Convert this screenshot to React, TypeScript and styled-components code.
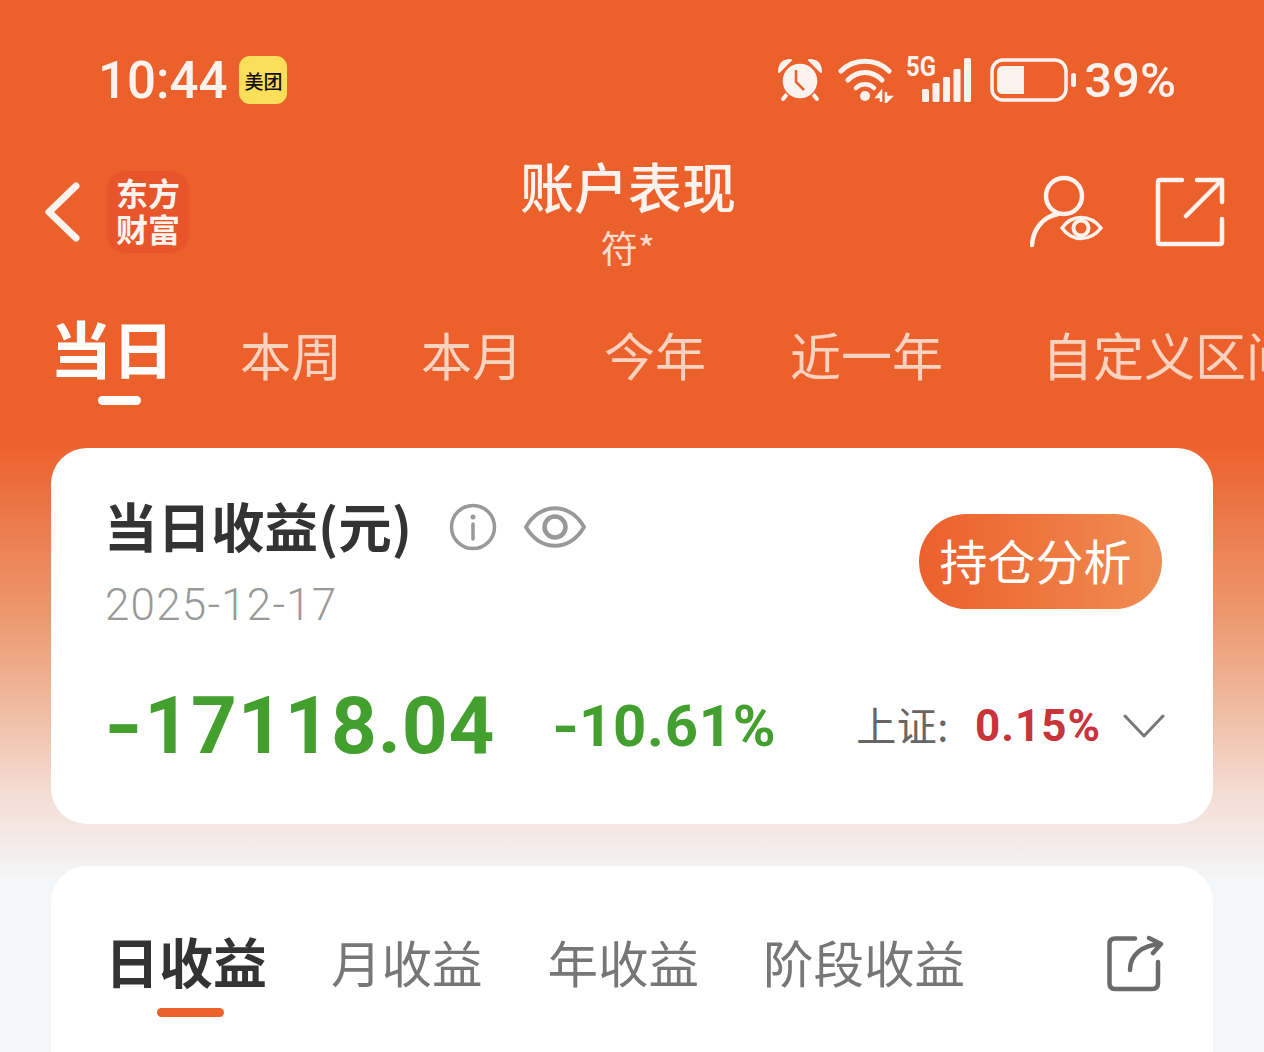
import * as React from 'react'
import styled, { createGlobalStyle } from 'styled-components'

const GlobalStyle = createGlobalStyle`
	html, body {
		margin: 0;
		padding: 0;
		background: #f5f6f8;
	}
	* {
		box-sizing: border-box;
	}
`

const rangeTabs = [
	{ label: '本周', gap: 79 },
	{ label: '本月', gap: 81 },
	{ label: '今年', gap: 84 },
	{ label: '近一年', gap: 99 },
	{ label: '自定义区间', gap: 0 },
]

const profitTabs = [
	{ label: '月收益', gap: 65 },
	{ label: '年收益', gap: 64 },
	{ label: '阶段收益', gap: 0 },
]

const signalBars = [
	{ x: 0, h: 13 },
	{ x: 10.5, h: 19 },
	{ x: 21, h: 25 },
	{ x: 31.5, h: 33 },
	{ x: 42, h: 44 },
]

const AlarmIcon = () => (
	<svg width="48" height="46" viewBox="0 0 48 46">
		<path d="M1 15 Q1 3 13 3 Z M43 15 Q43 3 31 3 Z" fill="#fdf3ee" stroke="#fdf3ee" strokeWidth="2" strokeLinejoin="round" />
		<path d="M10 36 L5 42 M34 36 L39 42" stroke="#fdf3ee" strokeWidth="4" strokeLinecap="round" />
		<circle cx="22" cy="24" r="18" fill="#fdf3ee" stroke="#ec602c" strokeWidth="1.5" />
		<path d="M18 13 V25 L26 33" fill="none" stroke="#ec602c" strokeWidth="2.5" />
	</svg>
)

const WifiIcon = () => (
	<svg width="56" height="46" viewBox="0 0 56 46" fill="none">
		<path d="M3 14 C16 1 38 1 51 14" stroke="#fdf3ee" strokeWidth="5" strokeLinecap="round" />
		<path d="M10 23 C20 13 34 13 44 23" stroke="#fdf3ee" strokeWidth="5" strokeLinecap="round" />
		<path d="M18 31 C23 26 31 26 36 31" stroke="#fdf3ee" strokeWidth="4.5" strokeLinecap="round" />
		<circle cx="27" cy="39" r="5" fill="#fdf3ee" />
		<path d="M43 45 V35 L39 40 H43 M48 35 V45 L53 40 H48" stroke="#fdf3ee" strokeWidth="2.5" />
	</svg>
)

const SignalIcon = () => (
	<svg width="49" height="44" viewBox="0 0 49 44">
		{signalBars.map((bar) => (
			<rect key={bar.x} x={bar.x} y={44 - bar.h} width="7" height={bar.h} rx="1.5" fill="#fdf3ee" />
		))}
	</svg>
)

const BatteryIcon = () => (
	<svg width="88" height="44" viewBox="0 0 88 44" fill="none">
		<rect x="2" y="2" width="74" height="40" rx="11" stroke="#fdf3ee" strokeWidth="3.5" />
		<path d="M7 14 Q7 8 13 8 H34 V36 H13 Q7 36 7 30 Z" fill="#fdf3ee" />
		<rect x="81" y="15" width="5" height="14" rx="2" fill="#fdf3ee" />
	</svg>
)

const BackIcon = () => (
	<svg width="38" height="64" viewBox="0 0 38 64" fill="none">
		<path d="M32 6 L5 32 L32 58" stroke="#fdf3ee" strokeWidth="7" strokeLinecap="round" strokeLinejoin="round" />
	</svg>
)

const WatchUserIcon = () => (
	<svg width="76" height="74" viewBox="0 0 76 74" fill="none" stroke="#fdf3ee" strokeLinecap="round">
		<circle cx="34" cy="21" r="18" strokeWidth="4.5" />
		<path d="M2 70 C3 55 12 42 28 39" strokeWidth="4.5" />
		<path d="M32 53 C42 39 60 39 71 53 C60 67 42 67 32 53 Z" strokeWidth="3.5" />
		<circle cx="51" cy="53" r="7.5" strokeWidth="4" />
	</svg>
)

const OpenIcon = () => (
	<svg width="70" height="70" viewBox="0 0 70 70" fill="none" stroke="#fdf3ee" strokeWidth="4.5" strokeLinecap="round" strokeLinejoin="round">
		<path d="M27 3 H5 Q3 3 3 5 V65 Q3 67 5 67 H65 Q67 67 67 65 V42" />
		<path d="M42 3 H67 V25 M67 3 L31 39" />
	</svg>
)

const InfoIcon = () => (
	<svg width="48" height="48" viewBox="0 0 48 48" fill="none" stroke="#999" strokeLinecap="round">
		<circle cx="24" cy="24" r="21.5" strokeWidth="3.5" />
		<circle cx="24" cy="14" r="2.5" fill="#999" stroke="none" />
		<path d="M24 21 V36" strokeWidth="3.5" />
	</svg>
)

const EyeIcon = () => (
	<svg width="62" height="48" viewBox="0 0 62 48" fill="none" stroke="#999">
		<path d="M2 24 C16 -1 46 -1 60 24 C46 49 16 49 2 24 Z" strokeWidth="3.8" />
		<circle cx="31" cy="24" r="10.5" strokeWidth="4.5" />
	</svg>
)

const ChevronIcon = () => (
	<svg width="42" height="26" viewBox="0 0 42 26" fill="none">
		<path d="M2 3 L21 23 L40 3" stroke="#777" strokeWidth="3" strokeLinecap="round" strokeLinejoin="round" />
	</svg>
)

const ShareIcon = () => (
	<svg width="58" height="57" viewBox="0 0 58 57" fill="none" stroke="#6b6b6b" strokeWidth="4.5" strokeLinecap="round" strokeLinejoin="round">
		<path d="M29 3.5 H9 Q3.5 3.5 3.5 9 V48 Q3.5 54 9 54 H46 Q52 54 52 48 V27" />
		<path d="M24 35 C24 20 36 10 55 9 M43 3 L55 9 L47 18" />
	</svg>
)

export default function App() {
	return (
		<Page>
			<GlobalStyle />
			<StatusBar>
				<Clock>10:44</Clock>
				<MeituanBadge>美团</MeituanBadge>
				<StatusIcons>
					<AlarmIcon />
					<WifiIcon />
					<NetworkGroup>
						<NetworkLabel>5G</NetworkLabel>
						<SignalIcon />
					</NetworkGroup>
					<BatteryIcon />
					<BatteryLevel>39%</BatteryLevel>
				</StatusIcons>
			</StatusBar>

			<Header>
				<HeaderLeft>
					<BackIcon />
					<BrandLogo>东方<br />财富</BrandLogo>
				</HeaderLeft>
				<TitleBlock>
					<Title>账户表现</Title>
					<Subtitle>符*</Subtitle>
				</TitleBlock>
				<HeaderActions>
					<WatchUserIcon />
					<OpenIcon />
				</HeaderActions>
			</Header>

			<RangeTabs>
				<ActiveRange>
					当日
					<RangeMarker />
				</ActiveRange>
				{rangeTabs.map((tab) => (
					<RangeTab key={tab.label} $gap={tab.gap}>{tab.label}</RangeTab>
				))}
			</RangeTabs>

			<SummaryCard>
				<SummaryTop>
					<div>
						<SummaryHeading>
							<SummaryTitle>当日收益(元)</SummaryTitle>
							<InfoIcon />
							<EyeSlot>
								<EyeIcon />
							</EyeSlot>
						</SummaryHeading>
						<SummaryDate>2025-12-17</SummaryDate>
					</div>
					<AnalysisButton>持仓分析</AnalysisButton>
				</SummaryTop>
				<SummaryBottom>
					<Amount><AmountSign>-</AmountSign>17118.04</Amount>
					<Percent><PercentSign>-</PercentSign>10.61%</Percent>
					<IndexBlock>
						<IndexLabel>上证:</IndexLabel>
						<IndexValue>0.15%</IndexValue>
						<ChevronIcon />
					</IndexBlock>
				</SummaryBottom>
			</SummaryCard>

			<ProfitCard>
				<ProfitTabs>
					<ActiveProfit>
						日收益
						<ProfitMarker />
					</ActiveProfit>
					{profitTabs.map((tab) => (
						<ProfitTab key={tab.label} $gap={tab.gap}>{tab.label}</ProfitTab>
					))}
				</ProfitTabs>
				<ShareSlot>
					<ShareIcon />
				</ShareSlot>
			</ProfitCard>
		</Page>
	)
}

const cjk = `"Noto Sans CJK SC", "Noto Sans", sans-serif`
const digits = `Roboto, "Noto Sans CJK SC", sans-serif`

const Page = styled.div`
	width: 1264px;
	height: 1052px;
	overflow: hidden;
	font-family: ${cjk};
	background: linear-gradient(180deg, #ec602c 0, #ec602c 440px, #ec9a70 620px, #f0c0a8 720px, #f3dcd2 790px, #f5f6f8 880px);
`

const StatusBar = styled.div`
	display: flex;
	align-items: center;
	height: 160px;
	padding: 0 88px 0 98px;
`

const Clock = styled.div`
	font-family: ${digits};
	font-size: 51px;
	font-weight: 500;
	color: #fdf3ee;
`

const MeituanBadge = styled.div`
	display: flex;
	align-items: center;
	justify-content: center;
	width: 48px;
	height: 48px;
	margin-left: 12px;
	border-radius: 11px;
	background: #fbdf5a;
	color: #111;
	font-size: 19px;
	font-weight: 500;
	white-space: nowrap;
`

const StatusIcons = styled.div`
	display: flex;
	align-items: center;
	gap: 12px;
	margin-left: auto;
`

const NetworkGroup = styled.div`
	position: relative;
	display: flex;
	padding: 0 7px 0 16px;
`

const NetworkLabel = styled.span`
	position: absolute;
	left: 0;
	top: -6px;
	font-family: ${digits};
	font-size: 28px;
	font-weight: 700;
	line-height: 30px;
	color: #fdf3ee;
	transform: scaleX(0.85);
	transform-origin: left center;
`

const BatteryLevel = styled.div`
	margin-left: -6px;
	font-family: ${digits};
	font-size: 49px;
	font-weight: 500;
	color: #fdf3ee;
`

const Header = styled.div`
	position: relative;
	display: flex;
	align-items: center;
	justify-content: space-between;
	height: 104px;
	padding: 0 39px 0 44px;
`

const HeaderLeft = styled.div`
	display: flex;
	align-items: center;
	gap: 25px;
`

const BrandLogo = styled.div`
	width: 82px;
	height: 82px;
	padding-top: 3px;
	border-radius: 18px;
	background: #e9552a;
	color: #fdf3ee;
	font-family: ${cjk};
	font-size: 32px;
	font-weight: 700;
	line-height: 36px;
	text-align: center;
`

const TitleBlock = styled.div`
	position: absolute;
	left: 300px;
	right: 308px;
	top: -4px;
	text-align: center;
	color: #fdf3ee;
`

const Title = styled.div`
	font-size: 54px;
	font-weight: 500;
	line-height: 60px;
`

const Subtitle = styled.div`
	margin-top: 7px;
	font-size: 37px;
	line-height: 48px;
	color: #fbdccd;
`

const HeaderActions = styled.div`
	display: flex;
	align-items: center;
	gap: 49px;
`

const RangeTabs = styled.div`
	display: flex;
	align-items: center;
	height: 184px;
	padding: 0 0 4px 50px;
	white-space: nowrap;
`

const ActiveRange = styled.div`
	position: relative;
	margin-right: 66px;
	margin-bottom: 14px;
	font-size: 62px;
	font-weight: 700;
	line-height: 70px;
	color: #fff;
`

const RangeMarker = styled.div`
	position: absolute;
	left: 48px;
	bottom: -23px;
	width: 43px;
	height: 9px;
	border-radius: 5px;
	background: #fff;
`

const RangeTab = styled.div<{ $gap: number }>`
	flex: none;
	margin-right: ${(props) => props.$gap}px;
	font-size: 51px;
	line-height: 70px;
	color: #fad3c0;
`

const Card = styled.div`
	width: 1162px;
	margin: 0 auto;
	background: #fff;
	border-radius: 36px;
`

const SummaryCard = styled(Card)`
	height: 376px;
	padding: 40px 51px 0 53px;
`

const SummaryTop = styled.div`
	display: flex;
	align-items: flex-start;
	justify-content: space-between;
`

const SummaryHeading = styled.div`
	display: flex;
	align-items: center;
	height: 78px;
`

const SummaryTitle = styled.div`
	margin-right: 37px;
	padding-bottom: 6px;
	font-size: 53.5px;
	font-weight: 700;
	color: #333;
`

const EyeSlot = styled.div`
	display: flex;
	margin-left: 27px;
`

const SummaryDate = styled.div`
	margin: 14px 0 0 1px;
	font-family: ${digits};
	font-size: 44px;
	font-weight: 300;
	line-height: 50px;
	letter-spacing: 1.2px;
	color: #999;
`

const AnalysisButton = styled.div`
	display: flex;
	align-items: center;
	justify-content: center;
	width: 243px;
	height: 95px;
	margin-top: 26px;
	padding: 0 10px 6px 0;
	border-radius: 48px;
	background: linear-gradient(90deg, #ec602c, #f08d52);
	color: #fff;
	font-size: 48px;
`

const SummaryBottom = styled.div`
	display: flex;
	align-items: center;
	height: 90px;
	margin-top: 51px;
`

const Amount = styled.div`
	font-family: ${digits};
	font-size: 80px;
	font-weight: 700;
	letter-spacing: 0.8px;
	color: #43a02f;
`

const AmountSign = styled.span`
	display: inline-block;
	margin-right: 8px;
	transform: scaleX(1.25);
	transform-origin: left center;
`

const Percent = styled.div`
	margin-left: 57px;
	font-family: ${digits};
	font-size: 58px;
	font-weight: 700;
	letter-spacing: 0.8px;
	color: #43a02f;
`

const PercentSign = styled.span`
	display: inline-block;
	margin-right: 3px;
	transform: scaleX(1.2);
	transform-origin: left center;
`

const IndexBlock = styled.div`
	display: flex;
	align-items: center;
	margin-left: auto;
	margin-right: -3px;
`

const IndexLabel = styled.div`
	padding-bottom: 4px;
	font-size: 40px;
	letter-spacing: 0.5px;
	color: #666;
`

const IndexValue = styled.div`
	margin: 0 22px 0 26px;
	font-family: ${digits};
	font-size: 44px;
	font-weight: 700;
	letter-spacing: 1px;
	color: #c8343a;
`

const ProfitCard = styled(Card)`
	display: flex;
	align-items: flex-start;
	justify-content: space-between;
	height: 300px;
	margin-top: 42px;
	padding: 64px 49px 0 54px;
`

const ProfitTabs = styled.div`
	display: flex;
	align-items: center;
`

const ActiveProfit = styled.div`
	position: relative;
	margin-right: 64px;
	font-size: 54px;
	font-weight: 700;
	line-height: 62px;
	color: #333;
`

const ProfitMarker = styled.div`
	position: absolute;
	left: 52px;
	bottom: -25px;
	width: 67px;
	height: 9px;
	border-radius: 5px;
	background: #ec602c;
`

const ProfitTab = styled.div<{ $gap: number }>`
	margin-right: ${(props) => props.$gap}px;
	font-size: 50.5px;
	line-height: 62px;
	color: #777;
`

const ShareSlot = styled.div`
	display: flex;
	margin-top: 5px;
`
